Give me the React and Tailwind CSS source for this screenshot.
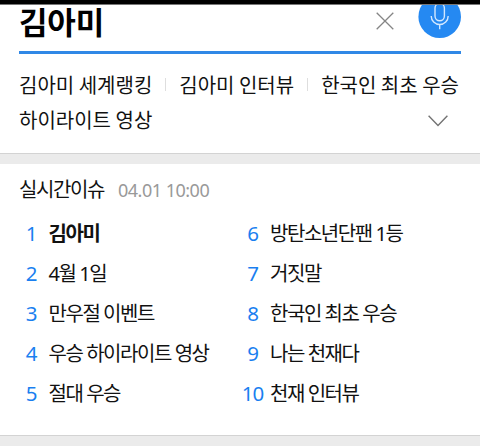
/**
 * App.jsx — Mobile search header with related keywords and the live issue ranking.
 */

const RELATED = ['김아미 세계랭킹', '김아미 인터뷰', '한국인 최초 우승']

const ISSUES = [
  ['김아미', '4월 1일', '만우절 이벤트', '우승 하이라이트 영상', '절대 우승'],
  ['방탄소년단팬 1등', '거짓말', '한국인 최초 우승', '나는 천재다', '천재 인터뷰'],
]

function SearchBar() {
  return (
    <div className="mr-[19px] ml-[19px] flex h-[49px] items-start border-b-[3px] border-[#3088e6]">
      <div className="-mt-[6px] flex-1 text-[31px] leading-[46px] font-bold tracking-[-0.2px] text-black">김아미</div>
      <svg className="mt-[6.5px] mr-[24px] h-[18px] w-[18px]" viewBox="0 0 18 18" fill="none" stroke="#858585" strokeWidth="1.3">
        <path d="M.7.7 17.3 17.3M17.3.7.7 17.3" />
      </svg>
      <div className="h-[34px] w-[43px] overflow-hidden">
        <svg className="-mt-[10px] h-[43px] w-[43px]" viewBox="0 0 43 43" fill="none" stroke="#d3e8ff" strokeWidth="1.4">
          <circle cx="21.7" cy="21.7" r="21.3" fill="#2589f2" stroke="none" />
          <rect x="17" y="8.5" width="9.4" height="17.3" rx="4.7" />
          <path d="M13.2 21a8.5 8.5 0 0 0 17 0M21.7 29.5v4.8" />
        </svg>
      </div>
    </div>
  )
}

function Related() {
  return (
    <div className="h-[100px] border-b border-[#d3d3d3] pt-[13px] pl-[19px] font-['Noto_Sans_CJK_KR',sans-serif] text-[20px] leading-[35px] whitespace-nowrap">
      <div className="flex items-center">
        {RELATED.map((text, i) => (
          <div key={text} className="flex items-center">
            {i > 0 && <span className="mr-[13px] ml-[13px] h-[13px] w-px bg-[#dedede]" />}
            <span>{text}</span>
          </div>
        ))}
      </div>
      <div className="flex items-center justify-between pr-8">
        <span>하이라이트 영상</span>
        <svg className="mt-[3px] h-[12px] w-[20px]" viewBox="0 0 20 12" fill="none" stroke="#737373" strokeWidth="1.4">
          <path d="m.6.8 9.4 9.8L19.4.8" />
        </svg>
      </div>
    </div>
  )
}

function IssueList({ items, start }) {
  return (
    <ol>
      {items.map((text, i) => (
        <li key={text} className="flex h-10 items-center">
          <span className="w-6 pb-[2px] text-center text-[20.5px] tracking-[-1px] text-[#1a7ff0]">{start + i}</span>
          <span className={`ml-[5.5px] text-[20px] tracking-[-1.45px] ${start + i === 1 ? 'font-bold' : ''}`}>{text}</span>
        </li>
      ))}
    </ol>
  )
}

export default function App() {
  return (
    <div className="h-[448px] w-[480px] overflow-hidden bg-white font-['Noto_Sans','Noto_Sans_CJK_KR',sans-serif] text-[#111]">
      <div className="h-[5px] border-b border-[#777] bg-black" />
      <SearchBar />
      <Related />
      <div className="h-[10px] bg-[#ebebeb]" />

      <section className="h-[271px] pt-[11px]">
        <div className="flex h-[30px] items-center pl-[19px]">
          <h2 className="text-[20px] tracking-[-1.4px]">실시간이슈</h2>
          <span className="ml-[14px] text-[18px] tracking-[-0.5px] text-[#999]">04.01 10:00</span>
        </div>
        <div className="mt-[9px] grid grid-cols-[221.5px_1fr] pl-[19px] whitespace-nowrap">
          <IssueList items={ISSUES[0]} start={1} />
          <IssueList items={ISSUES[1]} start={6} />
        </div>
      </section>

      <div className="h-[11px] border-t border-[#d3d3d3] bg-[#ebebeb]" />
    </div>
  )
}
